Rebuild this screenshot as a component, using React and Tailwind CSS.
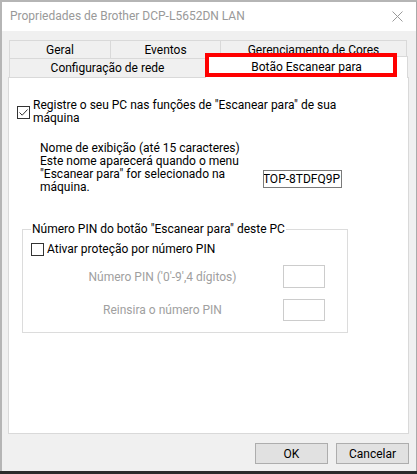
import { useState } from "react";

const CheckBox = ({ checked, onClick }) => (
  <span
    onClick={onClick}
    className="flex h-[13px] w-[13px] shrink-0 items-center justify-center border border-[#333333] bg-white"
  >
    {checked && (
      <svg width="11" height="11" viewBox="0 0 11 11">
        <path d="M1.5 5.5 L4.2 8.2 L9.5 2.5" fill="none" stroke="#333333" strokeWidth="1" />
      </svg>
    )}
  </span>
);

const App = () => {
  const [register, setRegister] = useState(true);
  const [pinOn, setPinOn] = useState(false);

  return (
    <div className="relative h-[474px] w-[417px] overflow-hidden bg-[#2b2b2b] font-['Roboto','Liberation_Sans',Arial,sans-serif] text-[12px] text-black">
      <div className="flex h-[471px] flex-col border-l-2 border-r border-t-2 border-[#b5b5b5] border-r-[#aaaaaa]">
        {/* title bar */}
        <div className="flex h-[29px] shrink-0 items-center justify-between bg-white pb-[1px] pl-[8px] pr-[13px]">
          <span className="text-[12px] text-[#999999]">
            Propriedades de Brother DCP-L5652DN LAN
          </span>
          <svg width="11" height="11" viewBox="0 0 11 11">
            <path d="M0.5 0.5 L10.5 10.5 M10.5 0.5 L0.5 10.5" stroke="#9a9a9a" strokeWidth="1" />
          </svg>
        </div>

        <div className="flex flex-1 flex-col bg-[#f0f0f0] pl-[6px] pr-[7px] pt-[9px]">
          {/* tabs */}
          <div className="ml-[1px] flex h-[18px]">
            <div className="flex w-[101px] items-center justify-center border-l border-t border-[#d9d9d9]">
              Geral
            </div>
            <div className="flex w-[110px] items-center justify-center border-l border-t border-[#d9d9d9]">
              Eventos
            </div>
            <div className="flex w-[187px] items-center justify-center border-l border-r border-t border-[#d9d9d9]">
              Gerenciamento de Cores
            </div>
          </div>
          <div className="ml-[1px] flex h-[19px] items-end">
            <div className="flex h-[19px] w-[196px] items-center justify-center border-l border-t border-[#d9d9d9]">
              Configuração de rede
            </div>
            <div className="relative z-10 -mb-px flex h-[22px] w-[203px] items-center justify-center border-l border-r border-t border-[#d9d9d9] bg-white pb-[2px]">
              Botão Escanear para
            </div>
          </div>

          {/* panel */}
          <div className="flex h-[357px] flex-col border border-[#d9d9d9] bg-white pt-[21px]">
            <div className="flex items-center gap-[3px] pl-[8px] leading-[13px]">
              <CheckBox checked={register} onClick={() => setRegister(!register)} />
              <span>
                Registre o seu PC nas funções de "Escanear para" de sua
                <br />
                máquina
              </span>
            </div>

            <div className="mt-[17px] flex items-start pl-[31px] leading-[13px]">
              <div className="w-[223px]">
                Nome de exibição (até 15 caracteres)
                <br />
                Este nome aparecerá quando o menu
                <br />
                "Escanear para" for selecionado na
                <br />
                máquina.
              </div>
              <div className="mt-[28px] flex h-[18px] w-[79px] items-center justify-end overflow-hidden whitespace-nowrap border border-[#7a7a7a] pr-[1px]">
                TOP-8TDFQ9P
              </div>
            </div>

            <fieldset className="ml-[13px] mt-[29px] w-[326px] border border-[#dcdcdc] px-0 pb-[11px]">
              <legend className="ml-[8px] px-[1px] leading-[13px]">
                Número PIN do botão "Escanear para" deste PC
              </legend>
              <div className="mt-[7px] flex items-center gap-[3px] pl-[8px] leading-[13px]">
                <CheckBox checked={pinOn} onClick={() => setPinOn(!pinOn)} />
                <span>Ativar proteção por número PIN</span>
              </div>
              <div className="mt-[9px] flex items-center pl-[37px] text-[#a0a0a0]">
                <span className="w-[205px] text-center">Número PIN ('0'-9',4 dígitos)</span>
                <div className="ml-[18px] h-[23px] w-[42px] border border-[#cccccc]" />
              </div>
              <div className="mt-[11px] flex items-center pl-[37px] text-[#a0a0a0]">
                <span className="w-[205px] text-center">Reinsira o número PIN</span>
                <div className="ml-[18px] h-[22px] w-[42px] border border-[#cccccc]" />
              </div>
            </fieldset>
          </div>

          {/* buttons */}
          <div className="mt-[9px] flex justify-end gap-[8px]">
            <button className="h-[21px] w-[73px] border border-[#adadad] bg-[#e1e1e1]">OK</button>
            <button className="h-[21px] w-[73px] border border-[#adadad] bg-[#e1e1e1]">Cancelar</button>
          </div>
        </div>
      </div>

      {/* highlight box */}
      <div className="pointer-events-none absolute left-[205px] top-[53px] z-20 h-[24px] w-[192px] border-4 border-[#ff0000]" />
    </div>
  );
};

export default App;
